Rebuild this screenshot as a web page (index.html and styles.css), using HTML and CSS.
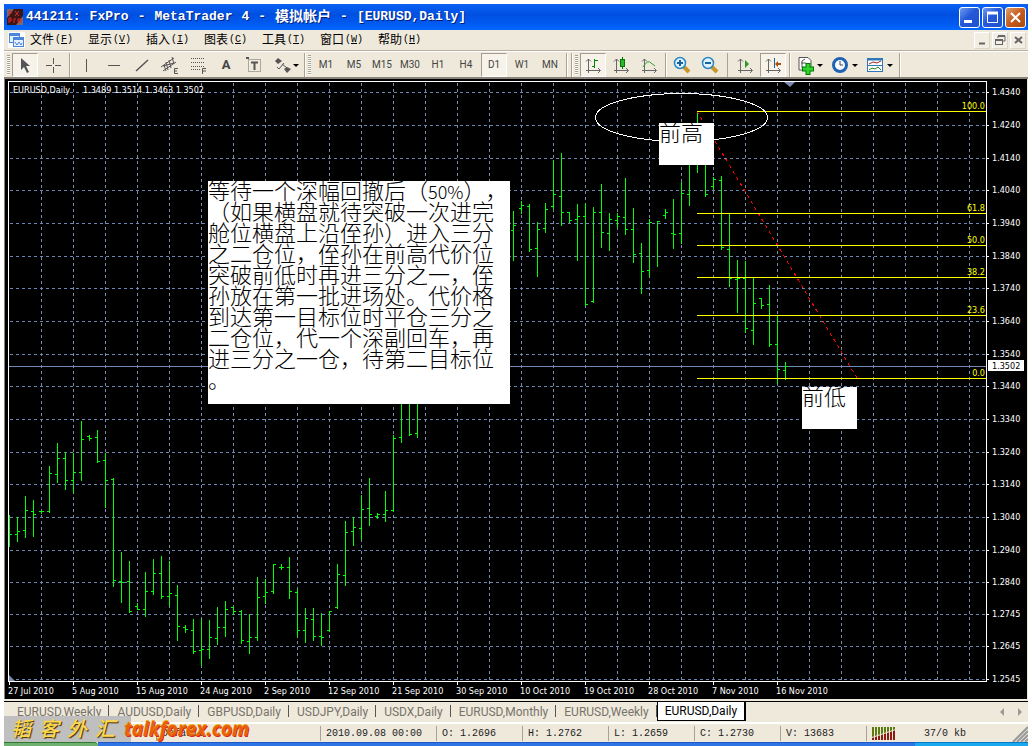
FILE: index.html
```html
<!DOCTYPE html>
<html lang="zh-CN">
<head>
<meta charset="utf-8">
<title>441211: FxPro - MetaTrader 4</title>
<link rel="stylesheet" href="styles.css">
</head>
<body>
<div class="window">
  <header class="titlebar">
    <svg class="app-icon" width="16" height="16" viewBox="0 0 16 16"><rect width="16" height="16" fill="#3a1616"/><path d="M0 0h7l-7 9zM9 16l7-9v9z" fill="#7b6a66"/><path d="M2 7V2h3M2 4h3M8 2l4 5M12 2L8 7" stroke="#c33" fill="none"/><path d="M2 14V9h2v3H2M7 14v-4h2M11 10h3v3h-3z" stroke="#e22" fill="none"/></svg>
    <h1 class="title"><span>441211:</span><span>FxPro</span><span>-</span><span>MetaTrader</span><span>4</span><span>-</span><span class="cjk">模拟帐户</span><span>-</span><span>[EURUSD,Daily]</span></h1>
    <div class="window-buttons">
      <button class="wbtn" aria-label="最小化"><svg width="19" height="19"><rect x="4" y="12" width="8" height="3" fill="#fff"/></svg></button>
      <button class="wbtn" aria-label="最大化"><svg width="19" height="19"><path d="M4.500 4v10.500h10V4" stroke="#fff" fill="none"/><path d="M4 5h11" stroke="#fff" stroke-width="3"/></svg></button>
      <button class="wbtn wclose" aria-label="关闭"><svg width="19" height="19"><path d="M5 5l9 9M14 5l-9 9" stroke="#fff" stroke-width="2"/></svg></button>
    </div>
  </header>

  <nav class="menubar">
    <svg class="doc-icon" width="17" height="16" viewBox="0 0 17 16"><rect width="17" height="16" fill="#fff"/><rect x="1.500" y="1.500" width="10" height="9" fill="#e4f0ff" stroke="#4b86d8"/><path d="M1 3h11" stroke="#4b86d8" stroke-width="2"/><rect x="5.500" y="5.500" width="10" height="9" fill="#e4f0ff" stroke="#4b86d8"/><path d="M5 7h11" stroke="#4b86d8" stroke-width="2"/><path d="M7 10l2 3 2-3 2 3 1-2" stroke="#4b86d8" fill="none"/></svg>
    <button class="menu">文件<span>(<u>F</u>)</span></button>
    <button class="menu">显示<span>(<u>V</u>)</span></button>
    <button class="menu">插入<span>(<u>I</u>)</span></button>
    <button class="menu">图表<span>(<u>C</u>)</span></button>
    <button class="menu">工具<span>(<u>T</u>)</span></button>
    <button class="menu">窗口<span>(<u>W</u>)</span></button>
    <button class="menu">帮助<span>(<u>H</u>)</span></button>
    <div class="mdi-buttons">
      <button class="mdi" aria-label="最小化图表"><svg width="12" height="12"><path d="M3 9.500h6" stroke="#666" stroke-width="2"/></svg></button>
      <button class="mdi" aria-label="还原图表"><svg width="12" height="12"><path d="M4 4V2h7v5H9" stroke="#666" fill="none"/><path d="M4 2h7M1 6h8" stroke="#666" stroke-width="2"/><rect x="1.500" y="5.500" width="7" height="5" stroke="#666" fill="none"/></svg></button>
      <button class="mdi" aria-label="关闭图表"><svg width="12" height="12"><path d="M3 3l7 6M10 3L3 9" stroke="#666" stroke-width="2"/></svg></button>
    </div>
  </nav>

  <div class="toolbar">
    <i class="grip"></i>
    <button class="tool on" aria-label="光标"><svg width="20" height="20"><path d="M6 3v12l3-3 3 6 2-1-3-6h4z" fill="#555"/></svg></button>
    <button class="tool" aria-label="十字准线"><svg width="20" height="20"><path d="M10.500 3v6M10.500 12v6M3 10.500h6M12 10.500h6" stroke="#555"/></svg></button>
    <i class="sep"></i>
    <button class="tool" aria-label="垂直线"><svg width="20" height="20"><path d="M10.500 4v13" stroke="#555"/></svg></button>
    <button class="tool" aria-label="水平线"><svg width="20" height="20"><path d="M4 10.500h12" stroke="#555"/></svg></button>
    <button class="tool" aria-label="趋势线"><svg width="20" height="20"><path d="M4 16L16 5" stroke="#555" stroke-width="1.500"/></svg></button>
    <button class="tool" aria-label="等距通道"><svg width="20" height="20"><path d="M1 12L14 3M3 16l13-9M4 10l2 6M6 7l2 8M9 5l2 8M12 2l2 7M3 11l11-3" stroke="#555"/><path d="M18 13.500h-3.500v5H18M14 16h3" stroke="#555" fill="none"/></svg></button>
    <button class="tool" aria-label="斐波那契回调"><svg width="20" height="20"><path d="M3 3.500h14M3 7.500h14M3 11.500h14M3 14.500h9" stroke="#555" stroke-dasharray="1 1"/><path d="M14.500 19v-5.500H18M15 16h3" stroke="#555" fill="none"/></svg></button>
    <button class="tool letter">A</button>
    <button class="tool" aria-label="文字标签"><svg width="20" height="20"><rect x="4.500" y="4.500" width="12" height="12" stroke="#666" stroke-dasharray="1 1" fill="none"/><path d="M2 3h3M7 7.500h7M10.500 7v8" stroke="#555" stroke-width="2"/></svg></button>
    <button class="tool drop-narrow" aria-label="箭头"><svg width="27" height="20"><path d="M3 6l3-3 4 3-4 3zM12 14l3-2 4 2-4 4z" fill="#555"/><path d="M5 12l2 2 5-6M10 9l5 4" stroke="#555" fill="none"/><path d="M21 9h6l-3 3z" fill="#000"/></svg></button>
    <i class="sep"></i>
    <i class="grip"></i>
    <button class="tool">M1</button><button class="tool">M5</button><button class="tool">M15</button><button class="tool">M30</button><button class="tool">H1</button><button class="tool">H4</button><button class="tool on">D1</button><button class="tool">W1</button><button class="tool">MN</button>
    <i class="sep"></i><i class="sep"></i>
    <i class="grip"></i>
    <button class="tool on" aria-label="柱状图"><svg width="20" height="20"><path d="M5.500 4v14M3 15.500h14M3 6.500l2.500-2.500L8 6.500M15 13l2.500 2.500L15 18" stroke="#666" fill="none"/><path d="M11.500 4v9M12 5.500h3M9 11.500h2" stroke="#080" stroke-width="1"/></svg></button>
    <button class="tool" aria-label="蜡烛图"><svg width="20" height="20"><path d="M5.500 4v14M3 15.500h14M3 6.500l2.500-2.500L8 6.500M15 13l2.500 2.500L15 18" stroke="#666" fill="none"/><path d="M11.500 2v12" stroke="#060"/><rect x="9.500" y="4.500" width="4" height="7" fill="#2db52d" stroke="#070"/></svg></button>
    <button class="tool" aria-label="折线图"><svg width="20" height="20"><path d="M5.500 4v14M3 15.500h14M3 6.500l2.500-2.500L8 6.500M15 13l2.500 2.500L15 18" stroke="#666" fill="none"/><path d="M4 12q5-8 8-4l4 3" stroke="#393" fill="none"/></svg></button>
    <i class="sep"></i>
    <button class="tool" aria-label="放大"><svg width="20" height="20"><path d="M12 12l5 5" stroke="#c9962b" stroke-width="4"/><circle cx="8" cy="8" r="5.500" fill="#dff2ff" stroke="#2a86c0" stroke-width="1.500"/><path d="M5 8h6M8 5v6" stroke="#17639c" stroke-width="2"/></svg></button>
    <button class="tool" aria-label="缩小"><svg width="20" height="20"><path d="M12 12l5 5" stroke="#c9962b" stroke-width="4"/><circle cx="8" cy="8" r="5.500" fill="#dff2ff" stroke="#2a86c0" stroke-width="1.500"/><path d="M5 8h6" stroke="#17639c" stroke-width="2"/></svg></button>
    <i class="sep sep-wide"></i>
    <button class="tool" aria-label="自动滚动"><svg width="20" height="20"><path d="M5.500 4v14M3 15.500h14M3 6.500l2.500-2.500L8 6.500M15 13l2.500 2.500L15 18" stroke="#666" fill="none"/><path d="M10 5v8l4-4z" fill="#2a9a2a"/></svg></button>
    <button class="tool on" aria-label="图表平移"><svg width="20" height="20"><path d="M5.500 4v14M3 15.500h14M3 6.500l2.500-2.500L8 6.500M15 13l2.500 2.500L15 18" stroke="#666" fill="none"/><path d="M11.500 3v10" stroke="#17639c" stroke-width="1"/><path d="M12 9l3-3v2h3v2h-3v2z" fill="#b04a10"/></svg></button>
    <i class="sep"></i>
    <button class="tool drop" aria-label="技术指标"><svg width="29" height="20"><path d="M4 2.500h9l3 3V15H4z" fill="#fff" stroke="#555"/><path d="M7 13V6l3-2M6 8h5" stroke="#555" fill="none"/><path d="M13 8v12M7 14h12" stroke="#070" stroke-width="5"/><path d="M13 9v10M8 14h10" stroke="#2fd62f" stroke-width="3"/><path d="M22 9h6l-3 3z" fill="#000"/></svg></button>
    <button class="tool drop" aria-label="时间周期"><svg width="29" height="20"><circle cx="10" cy="10" r="6.500" fill="#f4faff" stroke="#1e62b4" stroke-width="3"/><path d="M10 6v4h3" stroke="#444" fill="none"/><path d="M22 9h6l-3 3z" fill="#000"/></svg></button>
    <button class="tool drop" aria-label="模板"><svg width="29" height="20"><rect x="2.500" y="3.500" width="15" height="13" fill="#fff" stroke="#2d78b8"/><path d="M2 4.500h16" stroke="#2d78b8" stroke-width="2"/><path d="M2 10.500h16" stroke="#2d78b8"/><path d="M4 9l4-2 4 1 4-2" stroke="#922" fill="none"/><path d="M4 15l3-2 3 1 3-2 3 3" stroke="#282" fill="none"/><path d="M22 9h6l-3 3z" fill="#000"/></svg></button>
    <i class="sep"></i>
  </div>

  <main class="chart-frame">
    <svg id="chart" class="chart" viewBox="6 79 1021 620" role="img" aria-label="EURUSD,Daily"></svg>
  </main>

  <div class="tabs">
    <button class="tab">EURUSD,Weekly</button>
    <button class="tab">AUDUSD,Daily</button>
    <button class="tab">GBPUSD,Daily</button>
    <button class="tab">USDJPY,Daily</button>
    <button class="tab">USDX,Daily</button>
    <button class="tab">EURUSD,Monthly</button>
    <button class="tab">EURUSD,Weekly</button>
    <button class="tab active">EURUSD,Daily</button>
    <svg class="tab-arrows" width="24" height="8"><path d="M4 0v8L0 4zM18 0v8l4-4z" fill="#999"/></svg>
  </div>

  <footer class="status">
    <span></span>
    <span>Default</span>
    <span>2010.09.08 00:00</span>
    <span>O: 1.2696</span>
    <span>H: 1.2762</span>
    <span>L: 1.2659</span>
    <span>C: 1.2730</span>
    <span>V: 13683</span>
    <span class="net"><svg width="24" height="13"><path d="M0 0h24v2L0 10z" fill="#5c7a10"/><path d="M0 13v-2L24 3v10z" fill="#8b1a10"/><path d="M2.500 0v13M5.500 0v13M8.500 0v13M11.500 0v13M14.500 0v13M17.500 0v13M20.500 0v13M23.500 0v13" stroke="#efe9dc"/></svg><b>37/0 kb</b></span>
    <svg class="resize" width="16" height="16"><path d="M1 16L16 1M5 16L16 5M9 16l7-7M13 16l3-3" stroke="#999" stroke-width="2"/></svg>
  </footer>
  <div class="taskbar"><i></i><i></i><i></i></div>

  <div class="watermark"><div class="brand-cn"><span>韬</span><span>客</span><span>外</span><span>汇</span></div><span class="brand-en">talkforex.com</span></div>
</div>
<script src="chart.js"></script>
</body>
</html>
```
FILE: styles.css
```css
* { box-sizing: border-box; }
body { margin: 0; background: #fff; font-family: Roboto, "Noto Sans CJK SC", sans-serif; }
button { appearance: none; border: 0; padding: 0; margin: 0; background: none; font: inherit; color: inherit; }
svg { display: block; flex: none; }

.window { position: relative; margin: 4px 4px 0; background: #efe9dc; }

.titlebar { display: flex; align-items: center; height: 26px; padding: 0 2px 0 3px; background: linear-gradient(#0a62f4, #0050e0 40%, #0058ee 70%, #0468ff); }
.title { display: flex; flex: 1; gap: 9px; margin: 0 0 0 3px; font: bold 13px/20px "Liberation Mono", "Noto Sans CJK SC", monospace; color: #fff; text-shadow: 1px 1px 0 #00207a; white-space: nowrap; }
.title .cjk { font-size: 14px; }
.window-buttons { display: flex; gap: 2px; }
.wbtn { width: 21px; height: 21px; border: 1px solid #fff; border-radius: 3px; background: linear-gradient(135deg, #6f9cf0, #2458d8 45%, #1d52d0); }
.wclose { background: linear-gradient(135deg, #e0a070, #c65a1c 50%, #a84a10); }

.menubar { display: flex; align-items: center; height: 21px; padding: 0 2px 0 4px; border-bottom: 1px solid #b6b0a2; }
.doc-icon { margin-right: 5px; }
.menu { display: flex; align-items: center; gap: 1px; width: 58px; font-size: 12px; line-height: 18px; color: #000; }
.menu span { font: 10px/16px "Liberation Mono", monospace; }
.mdi-buttons { display: flex; gap: 2px; margin-left: auto; }
.mdi { display: flex; align-items: center; justify-content: center; width: 16px; height: 17px; border: 1px solid; border-color: #fff #dcd5c6 #dcd5c6 #fff; background: #f3eee4; }

.toolbar { display: flex; align-items: center; gap: 2px; height: 28px; padding: 0 3px; border-top: 1px solid #fff; border-bottom: 2px solid #8a8478; overflow: hidden; font-size: 10px; color: #444; }
.tool { display: flex; flex: none; align-items: center; justify-content: center; width: 26px; height: 24px; border: 1px solid transparent; }
.tool.on { border-color: #a39d90 #fff #fff #a39d90; background: #f7f3ea; }
.tool.letter { font-size: 13px; font-weight: 700; }
.tool.drop-narrow { width: 32px; }
.tool.drop { width: 33px; }
.sep { flex: none; width: 3px; height: 24px; border-right: 1px solid #fff; background: linear-gradient(90deg, transparent 1px, #a8a295 1px); }
.sep-wide { width: 5px; border: 0; background: linear-gradient(90deg, transparent 2px, #a8a295 2px, #a8a295 3px, transparent 3px); }
.grip { flex: none; width: 3px; height: 20px; background: repeating-linear-gradient(#a8a295 0 1px, #fff 1px 2px); }

.chart-frame { margin: 0 1px 0 0; padding-left: 1px; border-left: 1px solid #8a8478; background: #000; }
.chart { width: 100%; height: auto; background: #000; }
.chart text { font-family: "DejaVu Sans Condensed", "DejaVu Sans", sans-serif; font-size: 9px; fill: #fff; }
.chart .crisp { shape-rendering: crispEdges; }
.chart .fib-label { fill: #ff0; text-anchor: end; }
.chart .dark { fill: #000; }
.chart .note { font-family: "Noto Sans CJK SC", sans-serif; font-size: 22px; font-weight: 300; fill: #000; text-spacing-trim: space-all; }
.chart .note .num { font-size: 18px; }

.tabs { display: flex; align-items: flex-start; height: 23px; margin-top: 2px; padding-left: 5px; border-top: 1px solid #000; border-bottom: 2px solid #fff; font: 12px/16px Roboto, sans-serif; color: #77736a; }
.tab { position: relative; flex: none; padding: 0 8px; height: 19px; white-space: nowrap; }
.tab::after { content: ""; position: absolute; right: 0; top: 3px; height: 12px; border-right: 1px solid #555; }
.tab.active { padding: 0 7px; background: #fff; border: solid #000; border-width: 0 2px 1px 1px; color: #000; }
.tab.active::after { display: none; }
.tab-arrows { margin: 6px 4px 0 auto; }

.status { position: relative; display: grid; grid-template-columns: 152px 164px 116px 86px 86px 86px 86px 86px 1fr; align-items: center; height: 18px; font: 10px/15px "Liberation Mono", monospace; color: #222; }
.status span { height: 15px; padding-left: 5px; border-left: 1px solid #a8a295; white-space: nowrap; }
.status span:first-child { border: 0; }
.net { display: flex; align-items: center; gap: 28px; }
.net b { font-weight: 400; }
.resize { position: absolute; right: 0; bottom: 0; }

.taskbar { display: grid; grid-template-columns: 94px 1fr 113px; height: 4px; }
.taskbar i { background: #2f74e4; border-top: 1px solid #2058c8; }
.taskbar i:first-child { background: #6fb070; border-color: #2f7a30; border-radius: 0 4px 0 0; }
.taskbar i:last-child { background: #18a8f0; border-color: #0878c0; }

.watermark { position: absolute; left: 0; bottom: 4px; display: flex; align-items: center; height: 26px; white-space: nowrap; }
.brand-cn { display: flex; gap: 8px; width: 127px; height: 26px; padding-left: 7px; background: #c0bfc0; font: italic 500 20px/24px "Noto Sans CJK SC", sans-serif; color: #ffd84a; text-shadow: 1px 1px 1px #3a2a00; }
.brand-en { margin-left: -7px; font: italic 700 19px/24px "Open Sans", sans-serif; color: #e8600c; text-shadow: 0 -1px 0 #f0b020, 1px 1px 0 #d82a10; }
```
FILE: chart.js
```javascript
// One row per day, in pixels of the plot: bar number, high, low, open, close (null = hidden).
const bars = [
  [0,515,547,null,534],[1,517,542,534,531],[2,496,538,530,510],[3,500,537,511,514],[4,511,514,511,511],
  [5,466,513,511,473],[6,443,483,474,458],[7,452,490,458,480],[8,453,493,480,472],[9,421,481,472,439],
  [10,435,441,436,438],[11,430,463,437,461],[12,453,508,460,480],[13,478,587,479,580],[14,552,603,581,582],
  [15,561,613,581,611],[16,603,610,606,609],[17,572,617,609,591],[18,559,595,591,573],[19,556,599,573,596],
  [20,561,606,596,593],[21,585,641,595,626],[22,625,633,627,629],[23,619,654,630,651],[24,619,666,650,649],
  [25,620,659,649,637],[26,607,645,638,627],[27,601,637,627,609],[28,607,615,607,611],[29,610,644,611,640],
  [30,614,654,641,637],[31,577,641,637,597],[32,579,604,596,592],[33,564,594,591,564],[34,564,570,567,567],
  [35,557,599,567,591],[36,589,637,592,630],[37,608,643,630,618],[38,608,641,619,636],[39,613,646,636,637],
  [40,611,632,630,611],[41,564,609,607,574],[42,521,586,575,532],[43,517,546,531,527],[44,495,540,528,509],
  [45,478,526,508,514],[46,513,519,516,514],[47,491,522,514,510],[48,435,512,510,438],[49,400,443,437,null],
  [50,400,436,null,434],[51,400,438,433,null],[63,211,261,230,225],[64,201,214,208,205],[65,204,252,206,249],
  [66,222,277,248,229],[67,203,233,228,209],[68,160,209,206,194],[69,153,226,196,212],[70,212,223,212,220],
  [71,204,261,219,216],[72,203,306,216,304],[73,207,303,301,212],[74,184,248,212,232],[75,213,251,233,219],
  [76,213,228,220,216],[77,178,235,217,229],[78,208,263,229,254],[79,243,294,253,271],[80,219,277,270,222],
  [81,221,267,null,221],[82,209,219,215,212],[83,199,249,233,234],[84,182,244,233,193],[85,150,206,194,null],
  [86,111,173,null,111],[87,130,197,null,194],[88,177,190,186,179],[89,176,250,180,247],[90,213,287,249,278],
  [91,260,313,279,278],[92,261,333,278,328],[93,278,345,330,303],[94,298,309,298,305],[95,285,347,304,344],
  [96,316,384,344,369],[97,362,380,370,366]
];
const rows = [[92,"1.4340"],[125,"1.4240"],[158,"1.4140"],[190,"1.4040"],[223,"1.3940"],[256,"1.3840"],
  [288,"1.3740"],[321,"1.3640"],[354,"1.3540"],[386,"1.3440"],[419,"1.3340"],[452,"1.3240"],[484,"1.3140"],
  [517,"1.3040"],[550,"1.2940"],[582,"1.2840"],[614,"1.2745"],[646,"1.2645"],[679,"1.2545"]];
const dates = ["27 Jul 2010","5 Aug 2010","15 Aug 2010","24 Aug 2010","2 Sep 2010","12 Sep 2010","21 Sep 2010",
  "30 Sep 2010","10 Oct 2010","19 Oct 2010","28 Oct 2010","7 Nov 2010","16 Nov 2010"];
const fib = [[111,"100.0"],[213,"61.8"],[245,"50.0"],[277,"38.2"],[315,"23.6"],[378,"0.0"]];
const note = ["等待一个深幅回撤后（|50%|），","（如果横盘就待突破一次进完","舱位横盘上沿侄孙）进入三分",
  "之二仓位，侄孙在前高代价位","突破前低时再进三分之一，侄","孙放在第一批进场处。代价格",
  "到达第一目标位时平仓三分之","二仓位，代一个深副回车，再","进三分之一仓，待第二目标位","。"];

const path = (d, stroke, extra = "") => `<path class="crisp" d="${d}" stroke="${stroke}" fill="none" ${extra}/>`;
const text = (x, y, s, cls = "") => `<text x="${x}" y="${y}" class="${cls}">${s}</text>`;
let out = "";

let gv = "", gh = "";
for (let x = 41; x < 986; x += 32) gv += `M${x + .5} 83V681`;
rows.forEach(r => gh += `M10 ${r[0] + .5}H986`);
out += path(gv, "#7c8bb0", 'stroke-dasharray="3 3"') + path(gh, "#6c86b4", 'stroke-dasharray="3 3"');
out += path("M9 366.500H986", "#7088b4");

let b = "";
bars.forEach(([i, hi, lo, o, c]) => {
  const x = 9 + 8 * i;
  b += `M${x + .5} ${hi}V${lo}`;
  if (o !== null) b += `M${x - 2} ${o + .5}H${x}`;
  if (c !== null) b += `M${x + 1} ${c + .5}H${x + 3}`;
});
out += path(b, "#0f0");
out += path("M697 111L857 378", "#f00", 'stroke-dasharray="3 4"');
out += path(fib.map(f => `M697 ${f[0] + .5}H986`).join(""), "#ff0");
fib.forEach(f => out += text(985, f[0] - 2, f[1], "fib-label"));
out += '<ellipse class="crisp" cx="681.500" cy="117.500" rx="86" ry="24" fill="none" stroke="#fff"/>';

let axis = "M8.500 81V682M8 81.500H987M986.500 81V682M8 681.500H987";
rows.forEach(r => { axis += `M987 ${r[0] + .5}h2`; out += text(992, r[0] + 3, r[1]); });
dates.forEach((d, i) => {
  const x = 9 + 64 * i;
  axis += `M${x + .5} 682v3`;
  out += text(x - 1, 694, d);
});
out += path(axis, "#fff");
out += '<path d="M784 82h11l-5 5z" fill="#7c8bb0"/><path d="M9 675v6h6z" fill="#7c8bb0"/>';
out += '<rect x="988" y="360" width="36" height="11" fill="#fff"/>' + text(992, 369, "1.3502", "dark");
out += text(13, 93, "EURUSD,Daily") + text(83, 93, "1.3489 1.3514 1.3463 1.3502");

out += '<rect x="208" y="181" width="302" height="223" fill="#fff"/>';
note.forEach((line, i) => {
  const y = 199 + 21 * i;
  const [a, n, z] = line.split("|");
  out += text(208, y, n ? `${a}<tspan class="num">${n}</tspan>${z}` : a, "note");
});
out += '<rect x="659" y="123" width="55" height="42" fill="#fff"/>' + text(659, 141, "前高", "note");
out += '<rect x="802" y="387" width="55" height="42" fill="#fff"/>' + text(802, 405, "前低", "note");
document.getElementById("chart").innerHTML = out;
```
